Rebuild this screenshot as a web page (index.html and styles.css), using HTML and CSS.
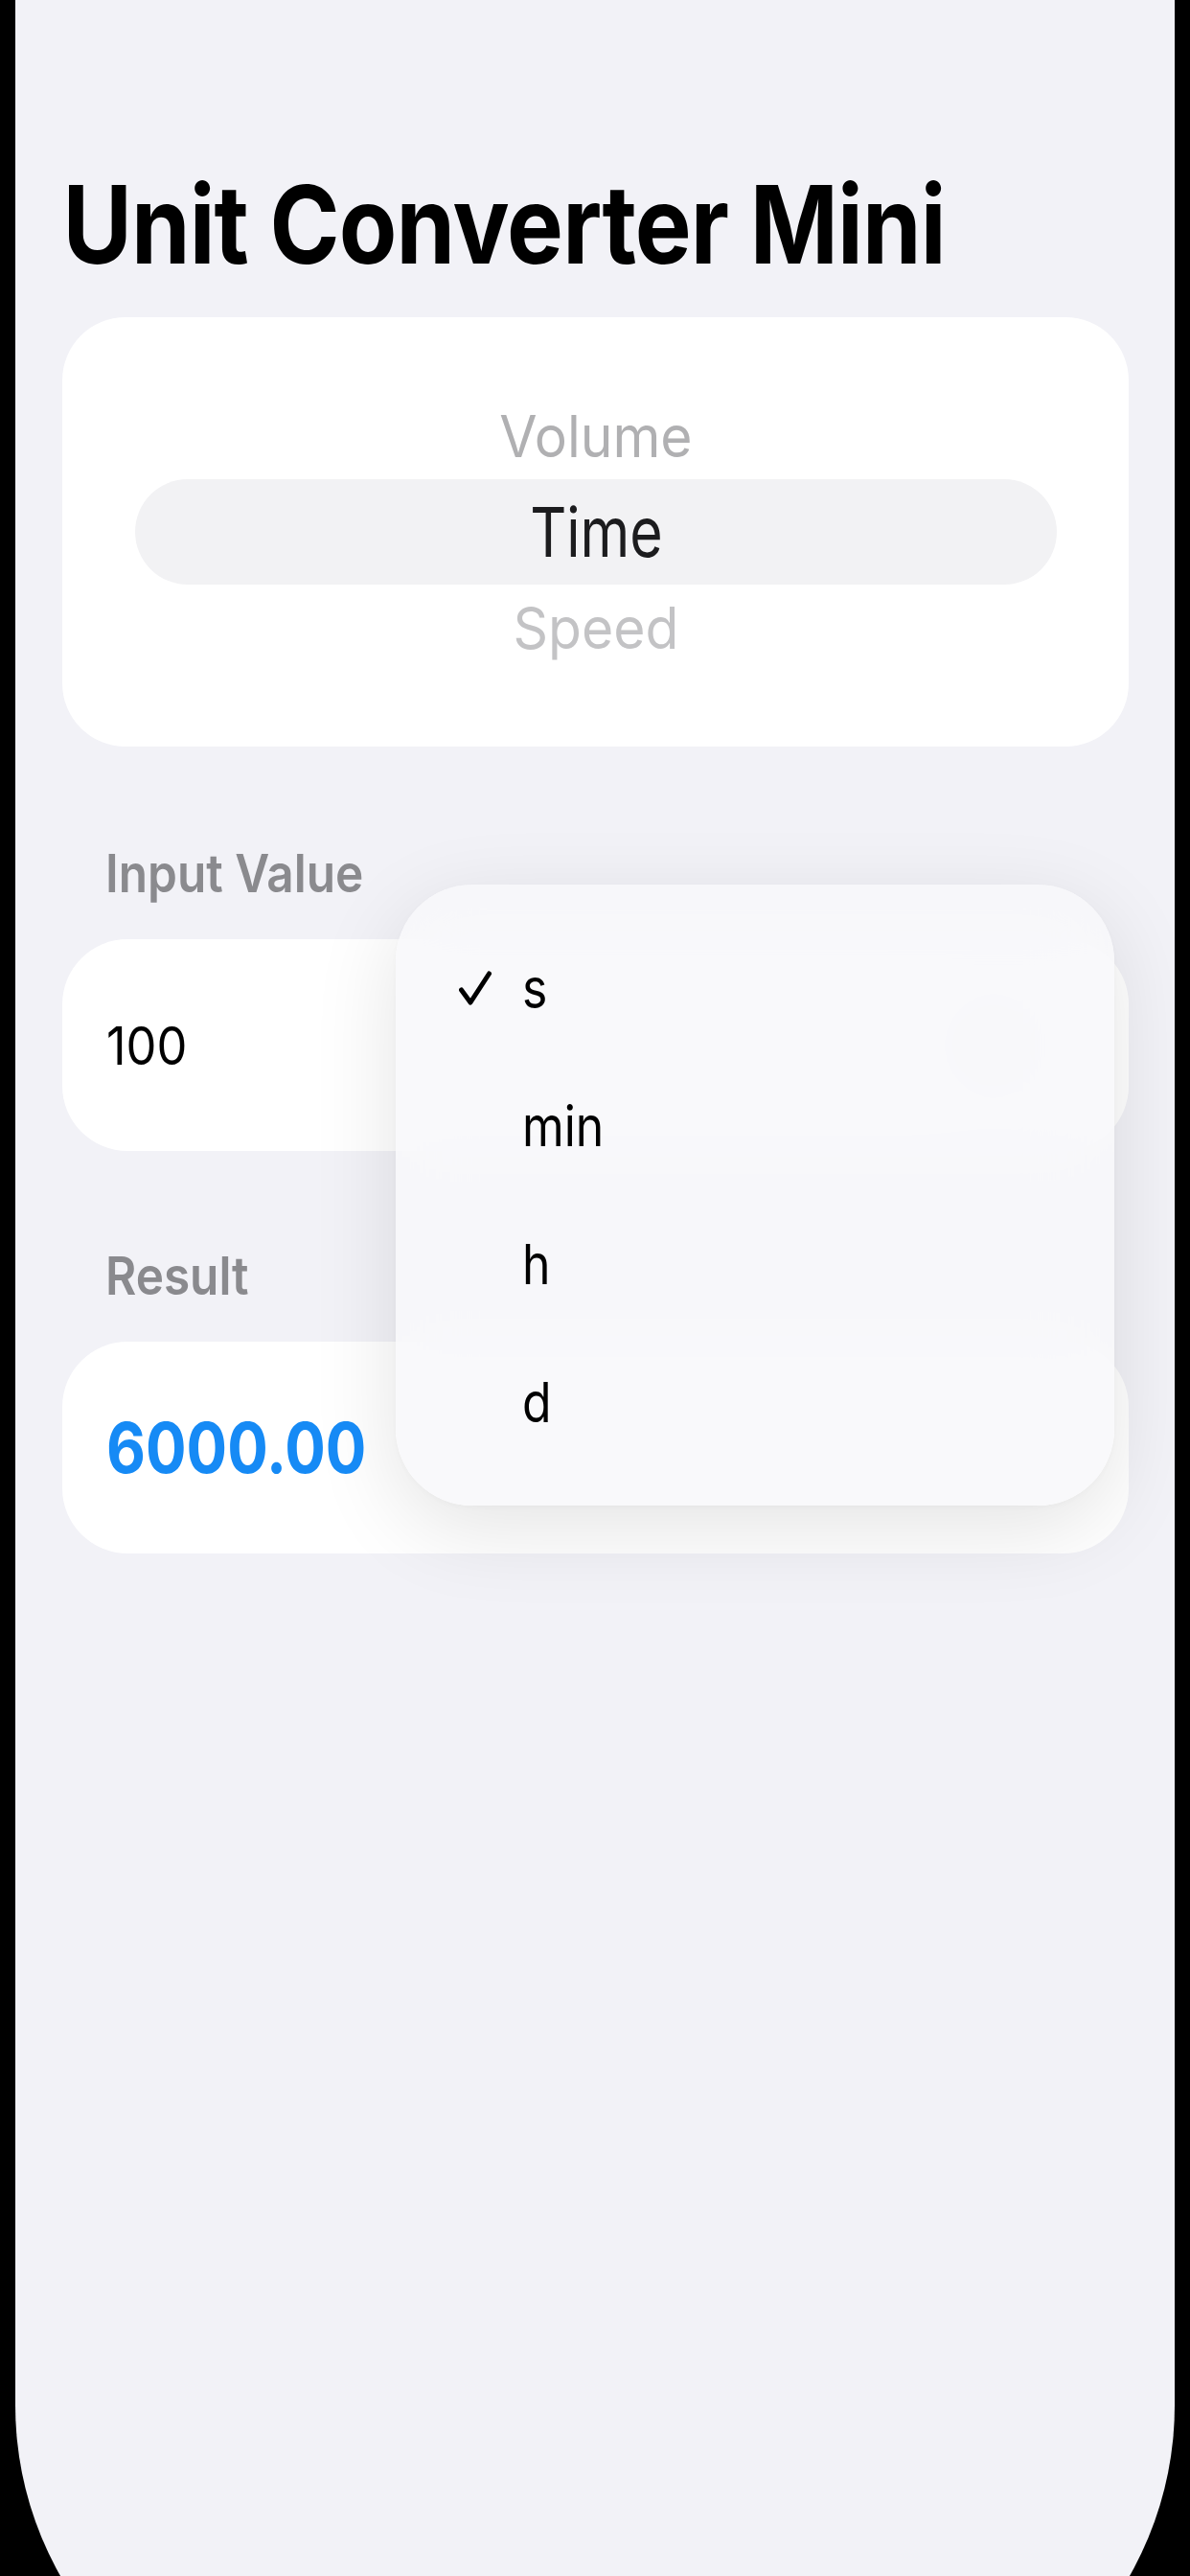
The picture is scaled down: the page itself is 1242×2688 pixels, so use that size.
FILE: index.html
```html
<!DOCTYPE html>
<html lang="en">
<head>
<meta charset="utf-8">
<title>Unit Converter Mini</title>
<link rel="stylesheet" href="styles.css">
</head>
<body>
<div class="screen">
  <main class="content">
    <h1 class="title">Unit Converter Mini</h1>

    <section class="card picker-card">
      <div class="wheel">
        <div class="wheel-item volume"><span class="wheel-text narrow-95">Volume</span></div>
        <div class="wheel-item selected"><span class="wheel-text narrow-82">Time</span></div>
        <div class="wheel-item speed"><span class="wheel-text narrow-95">Speed</span></div>
      </div>
    </section>

    <section class="field">
      <div class="label"><span class="label-text">Input Value</span></div>
      <div class="field-wrap">
        <div class="card value-card">
          <span class="value">100</span>
          <span class="unit-ghost"></span>
        </div>
        <div class="menu">
          <div class="menu-item">
            <span class="check-slot">
              <svg class="check" viewBox="0 0 34 36" width="34" height="36" aria-hidden="true">
                <path d="M2.5 20 L12 33 L31.5 3" fill="none" stroke="#000" stroke-width="5" stroke-linecap="round" stroke-linejoin="round"/>
              </svg>
            </span>
            <span class="menu-text">s</span>
          </div>
          <div class="menu-item"><span class="check-slot"></span><span class="menu-text">min</span></div>
          <div class="menu-item"><span class="check-slot"></span><span class="menu-text">h</span></div>
          <div class="menu-item"><span class="check-slot"></span><span class="menu-text">d</span></div>
        </div>
      </div>
    </section>

    <section class="field">
      <div class="label"><span class="label-text">Result</span></div>
      <div class="card value-card">
        <span class="result">6000.00</span>
      </div>
    </section>
  </main>
</div>
</body>
</html>
```

FILE: styles.css
```css
html, body {
  margin: 0;
  padding: 0;
  height: 2688px;
  overflow: hidden;
  background: #000;
}

.screen {
  margin: 0 16px;
  height: 2870px;
  background: #f2f2f7;
  border-radius: 0 0 360px 360px;
  font-family: Inter, "Noto Sans", sans-serif;
  color: #000;
}

.content {
  padding: 166px 48px 0 49px;
}

.title {
  margin: 0;
  font-size: 113px;
  line-height: 136px;
  font-weight: 700;
  letter-spacing: -1px;
  transform: scaleX(0.875);
  transform-origin: 4px 50%;
}

.card {
  background: #fff;
}

.picker-card {
  margin-top: 29px;
  border-radius: 66px;
  padding: 79px 75px 79px 76px;
}

.wheel-item {
  text-align: center;
  font-size: 60px;
  line-height: 90px;
  height: 90px;
}

.wheel-text {
  display: inline-block;
  transform-origin: 50% 50%;
}

.narrow-95 {
  transform: scaleX(0.95);
}

.narrow-82 {
  transform: scaleX(0.82);
}

.volume {
  color: #b0b0b2;
}

.speed {
  color: #c3c3c5;
}

.selected {
  font-size: 72px;
  line-height: 110px;
  height: 110px;
  background: #f2f2f4;
  border-radius: 55px;
  color: #1c1c1e;
}

.field {
  margin-top: 99px;
}

.field + .field {
  margin-top: 97px;
}

.label {
  font-size: 55px;
  line-height: 66px;
  font-weight: 600;
  color: #8a8a8e;
  padding-left: 45px;
  margin-bottom: 36px;
}

.label-text {
  display: inline-block;
  transform: scaleX(0.9);
  transform-origin: 0 50%;
}

.field-wrap {
  position: relative;
}

.value-card {
  height: 221px;
  box-sizing: border-box;
  display: flex;
  align-items: center;
  padding: 0 46px;
  border-radius: 68px;
}

.value {
  display: inline-block;
  font-size: 55px;
  font-weight: 400;
  transform: scaleX(0.92);
  transform-origin: 0 50%;
}

.result {
  display: inline-block;
  font-size: 73px;
  font-weight: 700;
  color: #168af5;
  transform: scaleX(0.865);
  transform-origin: 0 50%;
}

.unit-ghost {
  margin-left: auto;
  margin-right: 50px;
  width: 90px;
  height: 46px;
  border-radius: 23px;
  background: #e4e4e8;
  filter: blur(10px);
}

.menu {
  position: absolute;
  top: -57px;
  left: 348px;
  width: 750px;
  padding: 36px 0;
  background: rgba(248, 248, 250, 0.82);
  -webkit-backdrop-filter: blur(40px);
  backdrop-filter: blur(40px);
  border-radius: 80px;
  box-shadow: 0 24px 90px rgba(0, 0, 0, 0.11), 0 2px 10px rgba(0, 0, 0, 0.03);
}

.menu-item {
  height: 144px;
  display: flex;
  align-items: center;
  font-size: 58px;
  color: #000;
}

.menu-text {
  display: inline-block;
  transform: scaleX(0.86);
  transform-origin: 0 50%;
}

.check-slot {
  width: 132px;
  box-sizing: border-box;
  padding-left: 66px;
  display: flex;
  align-items: center;
}

.check {
  display: block;
}
```
